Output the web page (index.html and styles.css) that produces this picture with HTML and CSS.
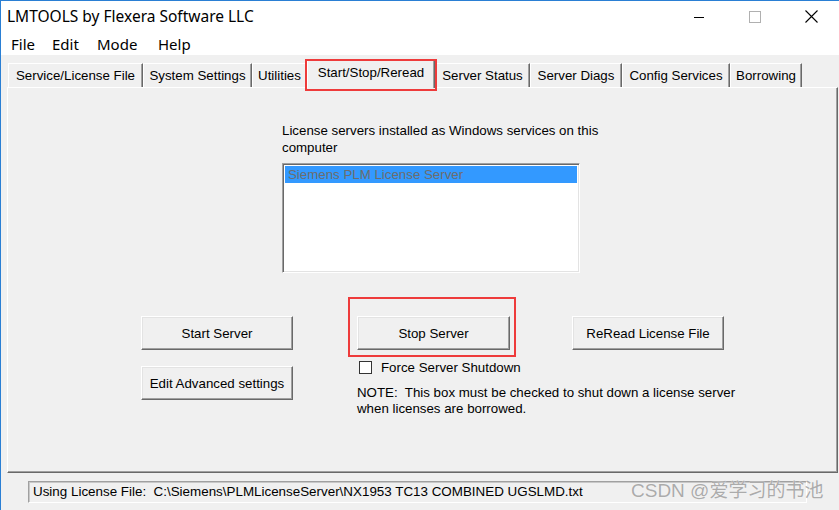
FILE: index.html
```html
<!DOCTYPE html>
<html>
<head>
<meta charset="utf-8">
<title>LMTOOLS</title>
<link rel="stylesheet" href="styles.css">
</head>
<body>
<div class="window">
  <div class="titlebar">
    <div class="title">LMTOOLS by Flexera Software LLC</div>
    <div class="winctrls">
      <div class="ctl"><svg width="12" height="12" viewBox="0 0 12 12"><line x1="1" y1="6.5" x2="11" y2="6.5" stroke="#000" stroke-width="1"/></svg></div>
      <div class="ctl"><svg width="12" height="12" viewBox="0 0 12 12"><rect x="0.5" y="0.5" width="11" height="11" fill="none" stroke="#b0b0b0" stroke-width="1"/></svg></div>
      <div class="ctl"><svg width="13" height="13" viewBox="0 0 13 13"><path d="M0.5 0.5 L12.5 12.5 M12.5 0.5 L0.5 12.5" stroke="#000" stroke-width="1.1" fill="none"/></svg></div>
    </div>
  </div>
  <div class="menubar">
    <span class="menu m-file">File</span>
    <span class="menu m-edit">Edit</span>
    <span class="menu m-mode">Mode</span>
    <span class="menu m-help">Help</span>
  </div>
  <div class="content">
    <div class="tabs">
      <div class="tab t1">Service/License File</div>
      <div class="tab t2">System Settings</div>
      <div class="tab t3">Utilities</div>
      <div class="tab tab-active">Start/Stop/Reread<span class="redbox redbox-tab"></span></div>
      <div class="tab t5">Server Status</div>
      <div class="tab t6">Server Diags</div>
      <div class="tab t7">Config Services</div>
      <div class="tab t8">Borrowing</div>
    </div>
    <div class="panel">
      <div class="services">
        <div class="services-label">License servers installed as Windows services on this<br>computer</div>
        <div class="listbox">
          <div class="list-item">Siemens PLM License Server</div>
        </div>
      </div>
      <div class="controls">
        <div class="cell"><button class="btn">Start Server</button></div>
        <div class="cell cell-stop"><button class="btn btn-stop">Stop Server</button><span class="redbox redbox-stop"></span></div>
        <div class="cell"><button class="btn">ReRead License File</button></div>
        <div class="cell"><button class="btn btn-adv">Edit Advanced settings</button></div>
        <div class="cell cell-wide">
          <label class="check-row"><span class="checkbox"></span><span>Force Server Shutdown</span></label>
          <div class="note">NOTE:&nbsp; This box must be checked to shut down a license server<br>when licenses are borrowed.</div>
        </div>
      </div>
    </div>
    <div class="statusbar">
      <div class="status-field">Using License File:&nbsp; C:\Siemens\PLMLicenseServer\NX1953 TC13 COMBINED UGSLMD.txt</div>
      <div class="watermark">CSDN @爱学习的书池</div>
    </div>
  </div>
</div>
</body>
</html>
```
FILE: styles.css
```css
html, body {
  margin: 0;
  padding: 0;
}
body {
  width: 839px;
  height: 510px;
  overflow: hidden;
  background: #f0f0f0;
  font-family: "Liberation Sans", Arial, sans-serif;
  color: #000;
}
.window {
  width: 838px;
  height: 509px;
  border-top: 1px solid #2a7fd4;
  border-left: 1px solid #2a7fd4;
  background: #f0f0f0;
  display: flex;
  flex-direction: column;
}
.titlebar {
  height: 31px;
  background: #fff;
  display: flex;
  align-items: center;
  justify-content: space-between;
}
.title {
  font-family: "Noto Sans", "Open Sans", sans-serif;
  font-size: 15.5px;
  padding-left: 6px;
  margin-top: -1px;
  color: #000;
}
.winctrls {
  display: flex;
  height: 31px;
}
.ctl {
  width: 56px;
  height: 31px;
  display: flex;
  align-items: center;
  justify-content: center;
}
.menubar {
  height: 23px;
  background: #fff;
  display: flex;
  align-items: center;
  font-family: "Noto Sans", "Open Sans", sans-serif;
  font-size: 15px;
  padding-left: 10px;
}
.menu {
  display: inline-block;
}
.m-file { width: 41px; }
.m-edit { width: 45px; }
.m-mode { width: 61px; }
.m-help { width: 40px; }

.content {
  flex: 1;
  padding-left: 6px;
  display: flex;
  flex-direction: column;
}
.tabs {
  height: 32px;
  display: flex;
  align-items: flex-end;
  padding-left: 1px;
}
.tab {
  height: 24px;
  box-sizing: border-box;
  border-top: 1px solid #fff;
  border-left: 1px solid #fff;
  border-right: 1px solid #696969;
  box-shadow: inset -1px 0 #a0a0a0;
  font-size: 13.3px;
  display: flex;
  align-items: center;
  justify-content: center;
  padding-bottom: 1px;
  white-space: nowrap;
}
.t1 { width: 135px; }
.t2 { width: 109px; }
.t3 { width: 55px; }
.t5 { width: 95px; }
.t6 { width: 92px; }
.t7 { width: 108px; }
.t8 { width: 72px; }
.tab-active {
  width: 128px;
  height: 28px;
  margin-bottom: -1px;
  background: #f0f0f0;
  position: relative;
  z-index: 2;
  padding-bottom: 5px;
}
.redbox {
  position: absolute;
  box-sizing: border-box;
  border: 2px solid #ee3b3b;
  pointer-events: none;
}
.redbox-tab {
  left: -3px;
  top: -2px;
  width: 132px;
  height: 32px;
}

.panel {
  width: 831px;
  height: 386px;
  box-sizing: border-box;
  border-top: 1px solid #fff;
  border-left: 1px solid #fff;
  border-right: 1px solid #696969;
  border-bottom: 1px solid #696969;
  box-shadow: inset -1px -1px #a0a0a0;
  display: flex;
  flex-direction: column;
}
.services {
  margin-left: 274px;
  margin-top: 34px;
}
.services-label {
  font-size: 13.3px;
  line-height: 17px;
}
.listbox {
  margin-top: 7px;
  width: 298px;
  height: 110px;
  box-sizing: border-box;
  background: #fff;
  border-top: 1px solid #a0a0a0;
  border-left: 1px solid #a0a0a0;
  border-right: 1px solid #fff;
  border-bottom: 1px solid #fff;
  box-shadow: inset 1px 1px #696969, inset -1px -1px #e3e3e3;
  padding: 2px;
}
.list-item {
  height: 17px;
  background: #3399ff;
  color: #6d6d6d;
  font-size: 13.3px;
  line-height: 17px;
  padding-left: 3px;
}
.controls {
  margin-top: 43px;
  margin-left: 133px;
  display: grid;
  grid-template-columns: 216px 215px 152px;
  grid-template-rows: 34px auto;
}
.cell {
  position: relative;
}
.btn {
  display: block;
  width: 152px;
  height: 34px;
  box-sizing: border-box;
  margin: 0;
  padding: 0;
  background: #f0f0f0;
  border: 1px solid;
  border-color: #fff #696969 #696969 #fff;
  box-shadow: inset -1px -1px #a0a0a0, inset 1px 1px #e3e3e3;
  font-family: "Liberation Sans", Arial, sans-serif;
  font-size: 13.3px;
  color: #000;
}
.btn-stop {
  width: 153px;
}
.btn-adv {
  margin-top: 16px;
}
.redbox-stop {
  left: -9px;
  top: -19px;
  width: 168px;
  height: 60px;
}
.cell-wide {
  grid-column: 2 / 4;
  font-size: 13.3px;
}
.check-row {
  display: flex;
  align-items: center;
  height: 16px;
  margin-top: 9px;
  padding-left: 2px;
}
.checkbox {
  width: 13px;
  height: 13px;
  box-sizing: border-box;
  border: 1px solid #333;
  background: #fff;
  margin-right: 9px;
}
.note {
  margin-top: 10px;
  line-height: 16px;
  white-space: nowrap;
}

.statusbar {
  margin-top: 8px;
  margin-left: 21px;
  position: relative;
}
.status-field {
  width: 779px;
  height: 22px;
  box-sizing: border-box;
  border-top: 1px solid #a0a0a0;
  border-left: 1px solid #a0a0a0;
  border-right: 1px solid #fff;
  border-bottom: 1px solid #fff;
  box-shadow: inset 1px 1px #c8c8c8;
  font-size: 13.4px;
  line-height: 20px;
  padding-left: 4px;
  white-space: nowrap;
}
.watermark {
  position: absolute;
  left: 603px;
  top: -1px;
  font-family: "Liberation Sans", "Noto Sans CJK SC", sans-serif;
  font-size: 19px;
  line-height: 22px;
  color: #ababab;
  white-space: nowrap;
  text-shadow: 0 0 1px #fff;
}
```
